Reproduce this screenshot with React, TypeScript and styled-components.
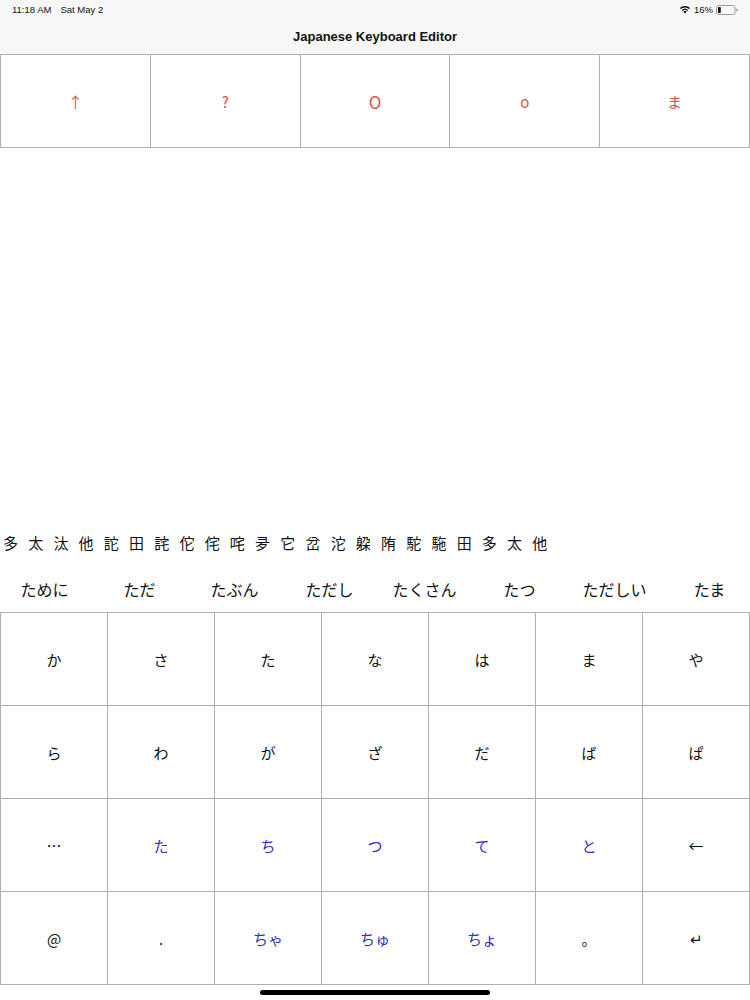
import React from "react";
import styled, { createGlobalStyle } from "styled-components";

const colors = {
    navBg: "#f7f7f8",
    line: "#b0b0b0",
    text: "#111111",
    red: "#e2504c",
    blue: "#2f2fc4",
};

const fonts = {
    ui: `"Liberation Sans", Roboto, "Noto Sans CJK JP", sans-serif`,
    jp: `"Noto Sans CJK JP", "Liberation Sans", sans-serif`,
};

const GlobalStyle = createGlobalStyle`
    html, body {
        margin: 0;
        padding: 0;
        background: #ffffff;
    }
    #root {
        height: 100vh;
    }
`;

const Screen = styled.div`
    height: 100vh;
    display: flex;
    flex-direction: column;
    font-family: ${fonts.jp};
    color: ${colors.text};
    overflow: hidden;
`;

const Header = styled.header`
    background-color: ${colors.navBg};
`;

const StatusBar = styled.div`
    height: 19px;
    display: flex;
    align-items: center;
    justify-content: space-between;
    padding: 0 12px;
    font-family: ${fonts.ui};
    font-size: 9.5px;
    color: ${colors.text};

    .status__left {
        display: flex;
        gap: 9px;
    }

    .status__right {
        display: flex;
        align-items: center;
        gap: 3px;
    }
`;

const NavTitle = styled.h1`
    margin: 0;
    height: 35px;
    display: flex;
    align-items: center;
    justify-content: center;
    box-sizing: border-box;
    font-family: ${fonts.ui};
    font-size: 13px;
    font-weight: bold;
`;

const Grid = styled.div<{ $cols: number; $rowHeight: number }>`
    display: grid;
    grid-template-columns: repeat(${(p) => p.$cols}, 1fr);
    grid-auto-rows: ${(p) => p.$rowHeight}px;
    gap: 1px;
    padding: 1px;
    background-color: ${colors.line};
`;

const Key = styled.div<{ $tone?: "red" | "blue" | "plain"; $big?: boolean }>`
    background-color: #ffffff;
    display: flex;
    align-items: center;
    justify-content: center;
    font-family: ${fonts.jp};
    font-size: ${(p) => (p.$big ? 17 : 15)}px;
    color: ${(p) =>
        p.$tone === "red" ? colors.red : p.$tone === "blue" ? colors.blue : colors.text};
`;

const Spacer = styled.div`
    flex: 1;
`;

const KanjiRow = styled.div`
    display: flex;
    gap: 10.2px;
    padding: 0 3px;
    height: 34px;
    align-items: center;
    font-size: 15px;
    line-height: 1;
`;

const CandidateRow = styled.div`
    display: grid;
    grid-template-columns: repeat(8, 95px);
    margin-left: -3px;
    height: 53px;
    align-items: center;
    padding-top: 6px;
    box-sizing: border-box;
    font-size: 16px;

    span {
        text-align: center;
        white-space: nowrap;
    }
`;

const HomeArea = styled.div`
    height: 15px;
    display: flex;
    justify-content: center;
    padding-top: 5px;
    box-sizing: border-box;

    .home__bar {
        width: 230px;
        height: 5px;
        border-radius: 3px;
        background-color: #000000;
    }
`;

const Wifi = () => (
    <svg width="12" height="9" viewBox="0 0 12 9">
        <path d="M6 8.6 L4.2 6.6 A2.6 2.6 0 0 1 7.8 6.6 Z" fill="#111" />
        <path d="M2.7 5 A4.8 4.8 0 0 1 9.3 5 L8.4 6 A3.5 3.5 0 0 0 3.6 6 Z" fill="#111" />
        <path d="M0.9 3.1 A7.4 7.4 0 0 1 11.1 3.1 L10.2 4.1 A6 6 0 0 0 1.8 4.1 Z" fill="#111" />
    </svg>
);

const Battery = () => (
    <svg width="22" height="10" viewBox="0 0 22 10">
        <rect x="0.5" y="0.5" width="18.5" height="9" rx="2.4" fill="none" stroke="#9a9a9a" />
        <rect x="2" y="2" width="2.8" height="6" rx="0.8" fill="#111" />
        <path d="M20.2 3.4 A1.6 1.6 0 0 1 20.2 6.6 Z" fill="#9a9a9a" />
    </svg>
);

const modeKeys = ["↑", "?", "O", "o", "ま"];

const kanji = "多太汰他詑田詫佗侘咤夛它岔沱躱陏駝駞田多太他".split("");

const candidates = ["ために", "ただ", "たぶん", "ただし", "たくさん", "たつ", "ただしい", "たま"];

type KeyDef = { label: string; tone?: "blue" | "plain" };

const keyboard: KeyDef[] = [
    ..."かさたなはまや".split("").map((label) => ({ label })),
    ..."らわがざだばぱ".split("").map((label) => ({ label })),
    { label: "…" },
    ..."たちつてと".split("").map((label) => ({ label, tone: "blue" as const })),
    { label: "←" },
    { label: "@" },
    { label: "." },
    { label: "ちゃ", tone: "blue" },
    { label: "ちゅ", tone: "blue" },
    { label: "ちょ", tone: "blue" },
    { label: "。" },
    { label: "↵" },
];

const App = () => {
    return (
        <>
            <GlobalStyle />
            <Screen>
                <Header>
                    <StatusBar>
                        <div className="status__left">
                            <span>11:18 AM</span>
                            <span>Sat May 2</span>
                        </div>
                        <div className="status__right">
                            <Wifi />
                            <span>16%</span>
                            <Battery />
                        </div>
                    </StatusBar>
                    <NavTitle>Japanese Keyboard Editor</NavTitle>
                </Header>
                <Grid $cols={5} $rowHeight={92}>
                    {modeKeys.map((k) => (
                        <Key key={k} $tone="red" $big={k === "O"}>
                            {k}
                        </Key>
                    ))}
                </Grid>
                <Spacer />
                <KanjiRow>
                    {kanji.map((c, i) => (
                        <span key={i}>{c}</span>
                    ))}
                </KanjiRow>
                <CandidateRow>
                    {candidates.map((w) => (
                        <span key={w}>{w}</span>
                    ))}
                </CandidateRow>
                <Grid $cols={7} $rowHeight={92}>
                    {keyboard.map((k, i) => (
                        <Key key={i} $tone={k.tone}>
                            {k.label}
                        </Key>
                    ))}
                </Grid>
                <HomeArea>
                    <div className="home__bar" />
                </HomeArea>
            </Screen>
        </>
    );
};

export default App;
